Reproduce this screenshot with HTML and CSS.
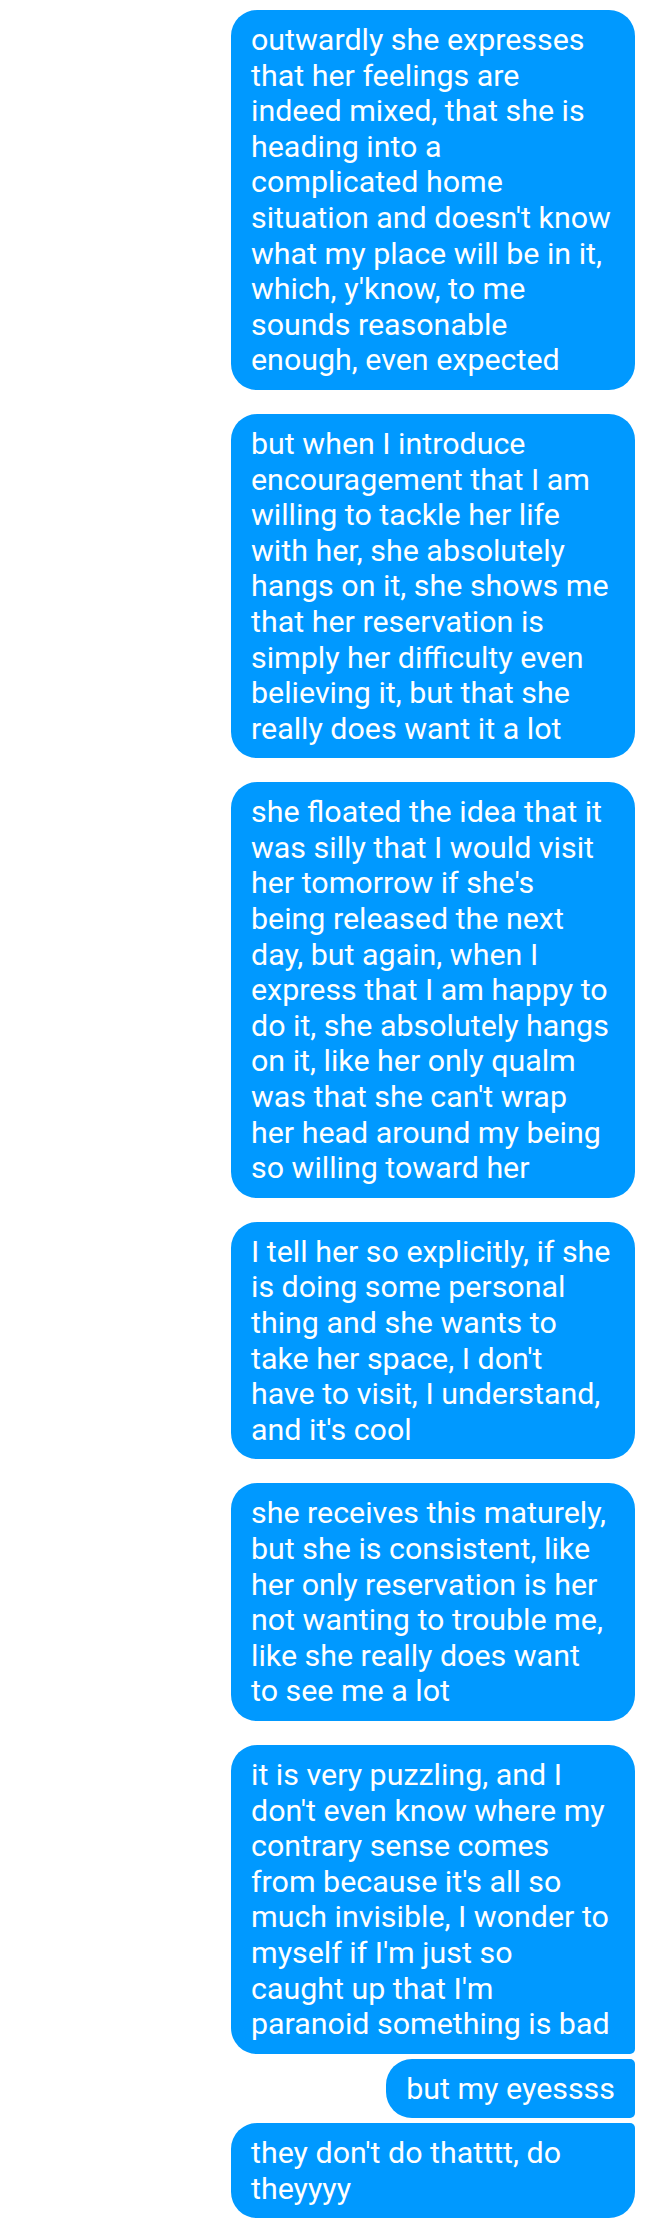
FILE: index.html
```html
<!DOCTYPE html>
<html>
<head>
<meta charset="utf-8">
<link rel="stylesheet" href="styles.css">
</head>
<body>
<div class="thread">
  <div class="msg">outwardly she expresses that her feelings are indeed mixed, that she is heading into a complicated home situation and doesn't know what my place will be in it, which, y'know, to me sounds reasonable enough, even expected</div>
  <div class="msg">but when I introduce encouragement that I am willing to tackle her life with her, she absolutely hangs on it, she shows me that her reservation is simply her difficulty even believing it, but that she really does want it a lot</div>
  <div class="msg">she floated the idea that it was silly that I would visit her tomorrow if she's being released the next day, but again, when I express that I am happy to do it, she absolutely hangs on it, like her only qualm was that she can't wrap her head around my being so willing toward her</div>
  <div class="msg">I tell her so explicitly, if she is doing some personal thing and she wants to take her space, I don't have to visit, I understand, and it's cool</div>
  <div class="msg">she receives this maturely, but she is consistent, like her only reservation is her not wanting to trouble me, like she really does want to see me a lot</div>
  <div class="group">
    <div class="msg first">it is very puzzling, and I don't even know where my contrary sense comes from because it's all so much invisible, I wonder to myself if I'm just so caught up that I'm paranoid something is bad</div>
    <div class="msg middle">but my eyessss</div>
    <div class="msg last">they don't do thatttt, do theyyyy</div>
  </div>
</div>
</body>
</html>
```
FILE: styles.css
```css
html, body {
  margin: 0;
  padding: 0;
  background: #ffffff;
}
body {
  width: 648px;
  height: 2232px;
  overflow: hidden;
  font-family: Roboto, "Noto Sans", sans-serif;
}
.thread {
  display: flex;
  flex-direction: column;
  align-items: flex-end;
  gap: 24px;
  padding: 10px 13px 12px 0;
}
.group {
  display: flex;
  flex-direction: column;
  align-items: flex-end;
  gap: 5px;
}
.msg {
  box-sizing: border-box;
  max-width: 404px;
  background: #0099ff;
  color: #ffffff;
  font-size: 30.4px;
  line-height: 35.6px;
  padding: 12px 23px 12px 20px;
  border-radius: 26px;
}
.msg.first { border-bottom-right-radius: 5px; }
.msg.middle { border-top-right-radius: 5px; border-bottom-right-radius: 5px; padding-right: 20px; }
.msg.last { border-top-right-radius: 5px; }
```
